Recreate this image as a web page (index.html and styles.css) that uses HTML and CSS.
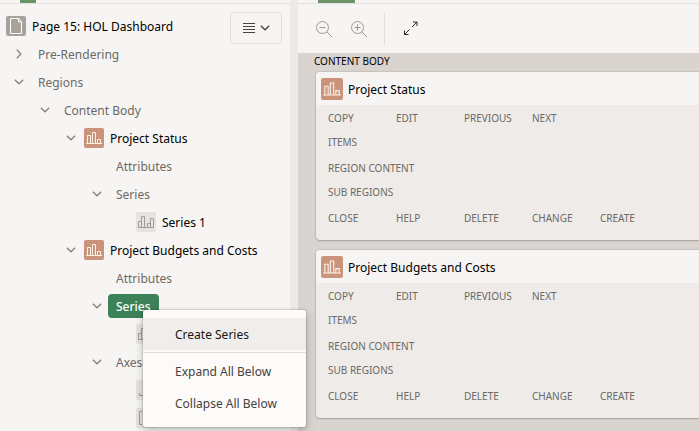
FILE: index.html
```html
<!DOCTYPE html>
<html lang="en">
<head>
<meta charset="utf-8">
<title>Page Designer</title>
<link rel="stylesheet" href="styles.css">
</head>
<body>
<svg class="defs" aria-hidden="true">
  <symbol id="chart" viewBox="0 0 20 20"><path d="M2 15.5h16M3.5 15.5v-8h3v8M8.5 15.5v-11h3v11M13.5 15.5v-4h3v4"/></symbol>
  <symbol id="series" viewBox="0 0 20 20"><path d="M2.5 15.5v-6h3v6zM5.5 15.5v-11h3v11zM11.5 15.5v-4h3v4zM14.5 15.5v-9h3v9zM2 15.5h16"/></symbol>
  <symbol id="axis-x" viewBox="0 0 20 20"><path d="M3.5 13v2.5h13V13"/></symbol>
  <symbol id="axis-y" viewBox="0 0 20 20"><path d="M6 3.5H3.5v13H6"/></symbol>
  <symbol id="page" viewBox="0 0 20 20"><path d="M4.500 2.500h8l3 3v12h-11zM12.500 2.500v3.500h3"/></symbol>
  <symbol id="down" viewBox="0 0 10 6"><path d="M.8.8 5 4.8 9.200.8"/></symbol>
  <symbol id="right" viewBox="0 0 6 10"><path d="M.8.8 4.8 5 .8 9.200"/></symbol>
</svg>
<div class="app">
  <aside class="sidebar">
    <div class="tabs"><span class="tab-mark"></span></div>
    <div class="tree-panel">
      <ul class="tree">
        <li>
          <div class="row"><svg class="icon page-icon"><use href="#page"/></svg><span class="label strong">Page 15: HOL Dashboard</span></div>
          <ul>
            <li><div class="row"><button class="toggle" aria-label="Expand Pre-Rendering"><svg class="right"><use href="#right"/></svg></button><span class="label">Pre-Rendering</span></div></li>
            <li><div class="row"><button class="toggle" aria-label="Collapse Regions"><svg class="down"><use href="#down"/></svg></button><span class="label">Regions</span></div>
              <ul class="nested">
                <li><div class="row"><button class="toggle" aria-label="Collapse Content Body"><svg class="down"><use href="#down"/></svg></button><span class="label">Content Body</span></div>
                  <ul class="nested">
                    <li><div class="row"><button class="toggle" aria-label="Collapse Project Status"><svg class="down"><use href="#down"/></svg></button><svg class="icon chart-icon"><use href="#chart"/></svg><span class="label strong">Project Status</span></div>
                      <ul class="nested">
                        <li><div class="row"><span class="toggle"></span><span class="label">Attributes</span></div></li>
                        <li><div class="row"><button class="toggle" aria-label="Collapse Series"><svg class="down"><use href="#down"/></svg></button><span class="label">Series</span></div>
                          <ul class="nested">
                            <li><div class="row"><span class="toggle"></span><svg class="icon muted-icon"><use href="#series"/></svg><span class="label strong">Series 1</span></div></li>
                          </ul>
                        </li>
                      </ul>
                    </li>
                    <li><div class="row"><button class="toggle" aria-label="Collapse Project Budgets and Costs"><svg class="down"><use href="#down"/></svg></button><svg class="icon chart-icon"><use href="#chart"/></svg><span class="label strong">Project Budgets and Costs</span></div>
                      <ul class="nested">
                        <li><div class="row"><span class="toggle"></span><span class="label">Attributes</span></div></li>
                        <li class="has-menu"><div class="row"><button class="toggle" aria-label="Collapse Series"><svg class="down"><use href="#down"/></svg></button><span class="label selected">Series</span></div>
                          <div class="menu">
                            <button class="menu-item active">Create Series</button>
                            <hr class="menu-line">
                            <button class="menu-item">Expand All Below</button>
                            <button class="menu-item">Collapse All Below</button>
                          </div>
                          <ul class="nested">
                            <li><div class="row"><span class="toggle"></span><svg class="icon muted-icon"><use href="#series"/></svg></div></li>
                          </ul>
                        </li>
                        <li><div class="row"><button class="toggle" aria-label="Collapse Axes"><svg class="down"><use href="#down"/></svg></button><span class="label">Axes</span></div>
                          <ul class="nested">
                            <li><div class="row"><span class="toggle"></span><svg class="icon muted-icon"><use href="#axis-x"/></svg></div></li>
                            <li><div class="row"><span class="toggle"></span><svg class="icon muted-icon"><use href="#axis-y"/></svg></div></li>
                          </ul>
                        </li>
                      </ul>
                    </li>
                  </ul>
                </li>
              </ul>
            </li>
          </ul>
        </li>
      </ul>
      <button class="tree-menu" aria-label="Tree menu">
        <svg class="lines" viewBox="0 0 12 12"><path d="M0 1.500h12M0 4.500h12M0 7.500h12M0 10.500h12"/></svg>
        <svg class="down"><use href="#down"/></svg>
      </button>
    </div>
  </aside>
  <div class="splitter"></div>
  <main class="main">
    <div class="tabs"><span class="tab-mark wide"></span></div>
    <div class="toolbar">
      <button class="tool" aria-label="Zoom out"><svg class="tool-icon" viewBox="0 0 18 18"><circle cx="7.500" cy="7.500" r="6"/><path d="M12 12l5 5M4.500 7.500h6"/></svg></button>
      <button class="tool" aria-label="Zoom in"><svg class="tool-icon" viewBox="0 0 18 18"><circle cx="7.500" cy="7.500" r="6"/><path d="M12 12l5 5M4.500 7.500h6M7.500 4.500v6"/></svg></button>
      <span class="divider"></span>
      <button class="tool" aria-label="Expand"><svg class="tool-icon dark" viewBox="0 0 18 18"><path d="M10 7l5-5M11 2h4v4M7.500 9.500l-5 5M2.500 10.500v4h4"/></svg></button>
    </div>
    <div class="canvas">
      <h2 class="canvas-title">CONTENT BODY</h2>
      <section class="card">
        <h3 class="card-head"><svg class="icon chart-icon large"><use href="#chart"/></svg><span class="card-title">Project Status</span></h3>
        <div class="card-body">
          <div class="slots"><span>COPY</span><span>EDIT</span><span>PREVIOUS</span><span>NEXT</span></div>
          <div class="group"><div>ITEMS</div></div>
          <div class="group"><div>REGION CONTENT</div><div>SUB REGIONS</div></div>
          <div class="slots"><span>CLOSE</span><span>HELP</span><span>DELETE</span><span>CHANGE</span><span>CREATE</span></div>
        </div>
      </section>
      <section class="card">
        <h3 class="card-head"><svg class="icon chart-icon large"><use href="#chart"/></svg><span class="card-title">Project Budgets and Costs</span></h3>
        <div class="card-body">
          <div class="slots"><span>COPY</span><span>EDIT</span><span>PREVIOUS</span><span>NEXT</span></div>
          <div class="group"><div>ITEMS</div></div>
          <div class="group"><div>REGION CONTENT</div><div>SUB REGIONS</div></div>
          <div class="slots"><span>CLOSE</span><span>HELP</span><span>DELETE</span><span>CHANGE</span><span>CREATE</span></div>
        </div>
      </section>
    </div>
  </main>
</div>
</body>
</html>
```
FILE: styles.css
```css
* { box-sizing: border-box; }
body {
  margin: 0;
  background: #f6f5f3;
  color: #161513;
  font: 12px/16px "Noto Sans", "Open Sans", sans-serif;
}
ul { margin: 0; padding: 0; list-style: none; }
button { margin: 0; padding: 0; border: 0; background: none; font: inherit; color: inherit; }
svg { display: block; flex: none; fill: none; stroke: currentColor; }
.defs { position: absolute; width: 0; height: 0; }

.app { display: flex; height: 100vh; overflow: hidden; }
.sidebar { flex: 0 0 290px; min-width: 0; display: flex; flex-direction: column; }
.splitter { flex: 0 0 8px; background: #edeae7; }
.main { flex: 1; min-width: 0; display: flex; flex-direction: column; }

.tabs { flex: none; height: 4px; padding-left: 20px; border-bottom: 1px solid #e3e1de; }
.tab-mark { display: block; width: 16px; height: 3px; background: #6d9468; }
.tab-mark.wide { width: 37px; }

.tree-panel { display: flex; align-items: flex-start; padding: 8px 8px 0 6px; }
.tree { flex: 1; min-width: 0; }
.nested { padding-left: 26px; }
.row { display: flex; align-items: center; height: 28px; white-space: nowrap; }
.toggle { flex: 0 0 26px; display: flex; align-items: center; justify-content: center; color: #85817d; }
.down { width: 10px; height: 6px; stroke-width: 1.3; }
.right { width: 6px; height: 10px; stroke-width: 1.3; }
.label { margin-left: -2px; padding: 5px 8px 3px; border-radius: 4px; color: #6b6966; }
.strong { color: #000; }
.selected { background: #3c8157; color: #fff; font-weight: 500; }

.icon { width: 20px; height: 20px; border-radius: 2px; }
.page-icon { background: #a8a29a; color: #fff; }
.chart-icon { background: #ca937b; color: #fff3e4; }
.muted-icon { background: #e6e3e0; color: #a09c98; }
.large { width: 22px; height: 22px; }

.tree-menu {
  flex: none;
  display: flex;
  align-items: center;
  justify-content: center;
  gap: 5px;
  width: 52px;
  height: 32px;
  border: 1px solid #e1dfdc;
  border-radius: 2px;
  color: #45423f;
}
.lines { width: 12px; height: 12px; }

.has-menu { position: relative; }
.menu {
  position: absolute;
  z-index: 2;
  top: 18px;
  left: 59px;
  width: 163px;
  padding: 8px 0;
  border-radius: 2px;
  background: #fcfbfa;
  box-shadow: 0 0 1px 1px rgba(0, 0, 0, .12), 0 4px 10px rgba(0, 0, 0, .22);
}
.menu-item { display: block; width: 100%; height: 32px; padding: 2px 0 0 32px; text-align: left; white-space: nowrap; color: #45423f; }
.active { background: #f0eeed; color: #161513; }
.menu-line { height: 1px; margin: 2px 0; border: 0; background: #e1dfdd; }

.toolbar { flex: none; display: flex; align-items: center; height: 49px; padding-left: 8px; }
.tool { display: flex; align-items: center; justify-content: center; width: 35px; height: 32px; }
.tool-icon { width: 18px; height: 18px; color: #9c9996; }
.dark { color: #302d2a; }
.divider { width: 1px; height: 32px; margin: 0 8px; background: #e1dfdc; }

.canvas { flex: 1; padding-left: 18px; background: #d9d4d0; }
.canvas-title { margin: 0 0 0 -2px; padding-bottom: 3px; font-size: 10px; font-weight: 400; color: #000; }
.card {
  margin-bottom: 10px;
  border-radius: 4px 0 0 4px;
  overflow: hidden;
  background: #eeebe8;
  box-shadow: 0 0 1px 1px rgba(0, 0, 0, .08), 0 1px 2px rgba(0, 0, 0, .18);
}
.card-head { display: flex; align-items: center; gap: 5px; height: 33px; margin: 0; padding-left: 5px; background: #f6f5f3; font-size: 12px; font-weight: 400; color: #000; }
.card-title { padding-top: 2px; }
.card-body { display: flex; flex-direction: column; padding: 1px 0 10px 12px; font-size: 10px; line-height: 24px; color: #6b6966; }
.slots { display: grid; grid-template-columns: repeat(5, 68px); }
.group + .group, .group + .slots { margin-top: 2px; }
```
